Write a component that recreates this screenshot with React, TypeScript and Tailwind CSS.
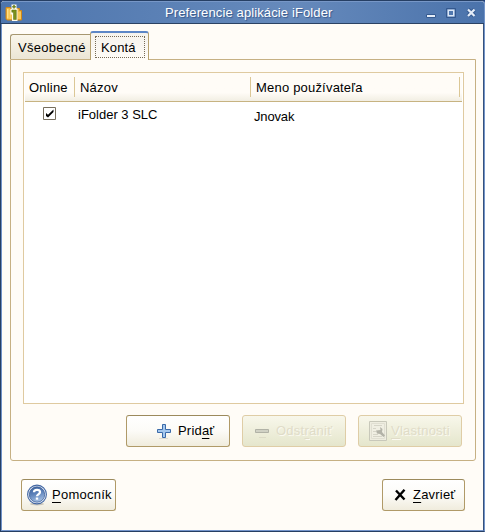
import type { ReactNode } from 'react';

function FolderIcon() {
  return (
    <svg width="18" height="20" viewBox="0 0 18 20" className="block">
      <path d="M1 4.500h4.500l1 2h3v-1h5v2H16.500v9.500H2.500L1 16z" fill="#f0b83f" stroke="#cf8618" />
      <path d="M2 6h1.500v9.500H2z" fill="#ffdf85" />
      <path d="M4.500 7h2v9h-2z" fill="#fad36c" />
      <path d="M13 9h3v7h-3z" fill="#f7c95a" />
      <path d="M6.500 1.500h5v4h1v12.500H7v-6.500H5.500V6h1z" fill="#fffdee" />
      <path d="M9 2v3.500M7.200 3.750h3.600" stroke="#718522" strokeWidth="1.600" />
      <path d="M6.800 7h4.500v9.500H8.500V9.200H6.800z" fill="#7b911a" stroke="#596d0c" strokeWidth=".5" />
    </svg>
  );
}

function HelpIcon() {
  return (
    <svg width="22" height="22" viewBox="0 0 22 22" className="block">
      <defs>
        <linearGradient id="help" x1="0" y1="0" x2="0.300" y2="1">
          <stop offset="0" stopColor="#3d639f" />
          <stop offset="0.500" stopColor="#5b80b8" />
          <stop offset="1" stopColor="#9fbbe0" />
        </linearGradient>
      </defs>
      <ellipse cx="11" cy="20" rx="7" ry="1.500" fill="#cbc7bb" />
      <circle cx="11" cy="10.500" r="9.400" fill="#e8effa" stroke="#4468a3" strokeWidth="1.100" />
      <circle cx="11" cy="10.500" r="7.700" fill="url(#help)" stroke="#33568f" strokeWidth=".7" />
      <path d="M8 8.300C8 5 14 5 14 8c0 2.300-3 2.300-3 4.300" fill="none" stroke="#fff" strokeWidth="2.300" />
      <path d="M9.800 13.500h2.400v2.200H9.800z" fill="#fff" />
    </svg>
  );
}

function PlusIcon() {
  return (
    <svg width="16" height="17" viewBox="0 0 16 17" className="block">
      <path d="M3 15.500h9" stroke="#dedbd0" />
      <path d="M6.500 1.500h3v5h5v3h-5v5h-3v-5h-5v-3h5z" fill="#a5c8ee" stroke="#3b6aa9" />
    </svg>
  );
}

function MinusIcon() {
  return (
    <svg width="16" height="17" viewBox="0 0 16 17" className="block">
      <path d="M5 14.500h7" stroke="#dddbc7" />
      <path d="M1.500 6.500h13v3h-13z" fill="#d0d1c4" stroke="#b1b2a6" />
    </svg>
  );
}

function PropertiesIcon() {
  return (
    <svg width="18" height="20" viewBox="0 0 18 20" className="block">
      <path d="M.5.500h17v19H.5z" fill="#eeede0" stroke="#c8c8ba" />
      <path d="M2.500 2.500h13v15h-13z" fill="#f0efe3" stroke="#e0dfd2" />
      <path d="M5 4.500h8M4 7.500h3M4 10.500h3M4 13.500h5M4 15.500h9" stroke="#d6d5c8" />
      <path d="M7 9.500 8 12.500l3 .5 3.500 3 1.500-1.500-3-3.500.5-3-2.500-2 .5 3z" fill="#b3b3a8" />
    </svg>
  );
}

function CloseIcon() {
  return (
    <svg width="12" height="12" viewBox="0 0 12 12" className="block">
      <path d="M2 1.500 10.500 10.500M10.500 .8 1.500 11" stroke="#000" strokeWidth="2.400" />
    </svg>
  );
}

function WindowControls() {
  return (
    <svg width="54" height="14" viewBox="0 0 54 14" className="block">
      <path d="M.5 7.500h9v3h-9z" fill="#e5edf8" stroke="#365b91" />
      <path d="M20.500 1.500h9v9h-9z" fill="none" stroke="#34588e" />
      <path d="M22.250 3.250h5.500v5.500h-5.500z" fill="none" stroke="#dce7f5" strokeWidth="1.500" />
      <path d="m42 2.500 6.500 6.500M48.500 2.500 42 9" stroke="#365b91" strokeWidth="4" />
      <path d="m42 2.500 6.500 6.500M48.500 2.500 42 9" stroke="#e5edf8" strokeWidth="2.200" />
    </svg>
  );
}

function Button({ className, disabled, children }: { className: string; disabled?: boolean; children: ReactNode }) {
  const tone = disabled
    ? 'border-[#dfcda6] bg-linear-to-b from-[#f8f7eb] to-[#e5e6cc] text-[#e0dcc8] [text-shadow:1px_1px_0_#fbfaf1]'
    : 'border-[#b09a68] border-t-[#9c8a5c] bg-linear-to-b from-white via-[#fcfbf7] to-[#f0ecdd] text-black';
  return (
    <button disabled={disabled} className={`flex h-8 items-center rounded-[3px] border ${tone} ${className}`}>
      {children}
    </button>
  );
}

function Key({ children }: { children: ReactNode }) {
  return <span className="underline decoration-1 underline-offset-[3px] [text-decoration-skip-ink:none]">{children}</span>;
}

export default function App() {
  return (
    <div className="bg-[#1f3f7d]">
    <div className="flex h-[532px] w-[485px] flex-col overflow-hidden rounded-t-[4px] border border-[#263f64] border-r-[#7394c8] bg-[#fffcf7] font-['Liberation_Sans',Arial,sans-serif] text-[13px] leading-4 whitespace-nowrap text-black">
      <header className="flex h-[23px] shrink-0 items-center border-t border-b border-t-[#7797c7] border-b-[#2b4263] bg-linear-to-r from-[#4d75ad] via-[#668abc] via-60% to-[#4b73ab]">
        <div className="ml-[4px] w-[18px]"><FolderIcon /></div>
        <h1 className="ml-[142px] w-[169px] tracking-[0.12px] pt-px text-white [text-shadow:1px_1px_1px_#38588b]">Preferencie aplikácie iFolder</h1>
        <div className="ml-[92px] pt-[3px]"><WindowControls /></div>
      </header>
      <main className="flex grow flex-col border-r border-b border-l border-r-[#35517c] border-b-[#7495cc] border-l-[#7192c8] pt-[7px] pl-2">
        <div className="z-10 -mb-px flex h-[29px] items-end">
          <div className="mb-px flex h-[25px] w-[80px] items-center rounded-tl-[3px] border border-r-0 border-b-0 border-[#a79770] bg-linear-to-b from-[#faf6eb] to-[#ebe5d5] pt-px pl-[7px] tracking-[0.3px]">Všeobecné</div>
          <div className="flex h-[29px] w-[59px] rounded-t-[3px] border-x border-t-2 border-x-[#b6a16e] border-t-[#5b86c6] bg-linear-to-b from-[#f5f3ed] to-[#fffcf7] pt-[3px] pl-1">
            <div className="flex h-[22px] w-[50px] items-center pl-[5px] pt-[2px] border border-dotted border-[#756a55] tracking-[0.15px]">Kontá</div>
          </div>
        </div>
        <section className="flex h-[402px] w-[466px] flex-col rounded-b-[3px] border border-[#c6b083] pt-3 pl-3">
          <div className="h-[332px] w-[441px] border border-[#dfcaa0] bg-white">
            <div className="ml-px flex h-[29px] w-[437px] items-center border-b border-[#c7b381] bg-linear-to-b from-[#fffcf7] from-70% to-[#f2eee3] tracking-[0.2px]">
              <div className="h-5 w-[50px] border-r border-[#dbc796] pt-[3px] pl-1">Online</div>
              <div className="h-5 w-[176px] border-r border-[#dbc796] pt-[3px] pl-[5px]">Názov</div>
              <div className="h-5 w-[209px] border-r border-[#dbc796] pt-[3px] pl-[5px]">Meno používateľa</div>
            </div>
            <div className="flex h-7">
              <div className="w-[54px] pt-[5px] pl-[19px]">
                <svg width="13" height="13" viewBox="0 0 13 13" className="block" role="img" aria-label="Online">
                  <path d="M.5.500h12v12H.5z" fill="#fff" stroke="#766e5e" />
                  <path d="M3 6v3l2 1.500L10.500 5V2.500L5 7.800z" fill="#000" />
                </svg>
              </div>
              <div className="w-[176px] pt-[5px]">iFolder 3 SLC</div>
              <div className="pt-[7px] tracking-[-0.15px]">Jnovak</div>
            </div>
          </div>
          <div className="mt-[11px] ml-[103px] flex gap-3">
            <Button className="w-[104px] pl-[29px]"><PlusIcon /><span className="ml-[6px] tracking-[0.2px]">Prid<Key>a</Key>ť</span></Button>
            <Button disabled className="w-[104px] pl-[11px]"><MinusIcon /><span className="ml-[6px] tracking-[0.25px]">Odst<Key>r</Key>ániť</span></Button>
            <Button disabled className="w-[104px] pl-[10px]"><PropertiesIcon /><span className="ml-1 tracking-[0.25px]"><Key>V</Key>lastnosti</span></Button>
          </div>
        </section>
        <footer className="mt-[18px] ml-[11px] flex">
          <Button className="w-[95px] pl-1"><HelpIcon /><span className="ml-1 tracking-[0.25px]"><Key>P</Key>omocník</span></Button>
          <Button className="ml-[266px] w-[83px] pl-[11px]"><CloseIcon /><span className="ml-[7px] tracking-[0.2px]"><Key>Z</Key>avrieť</span></Button>
        </footer>
      </main>
    </div>
    </div>
  );
}
